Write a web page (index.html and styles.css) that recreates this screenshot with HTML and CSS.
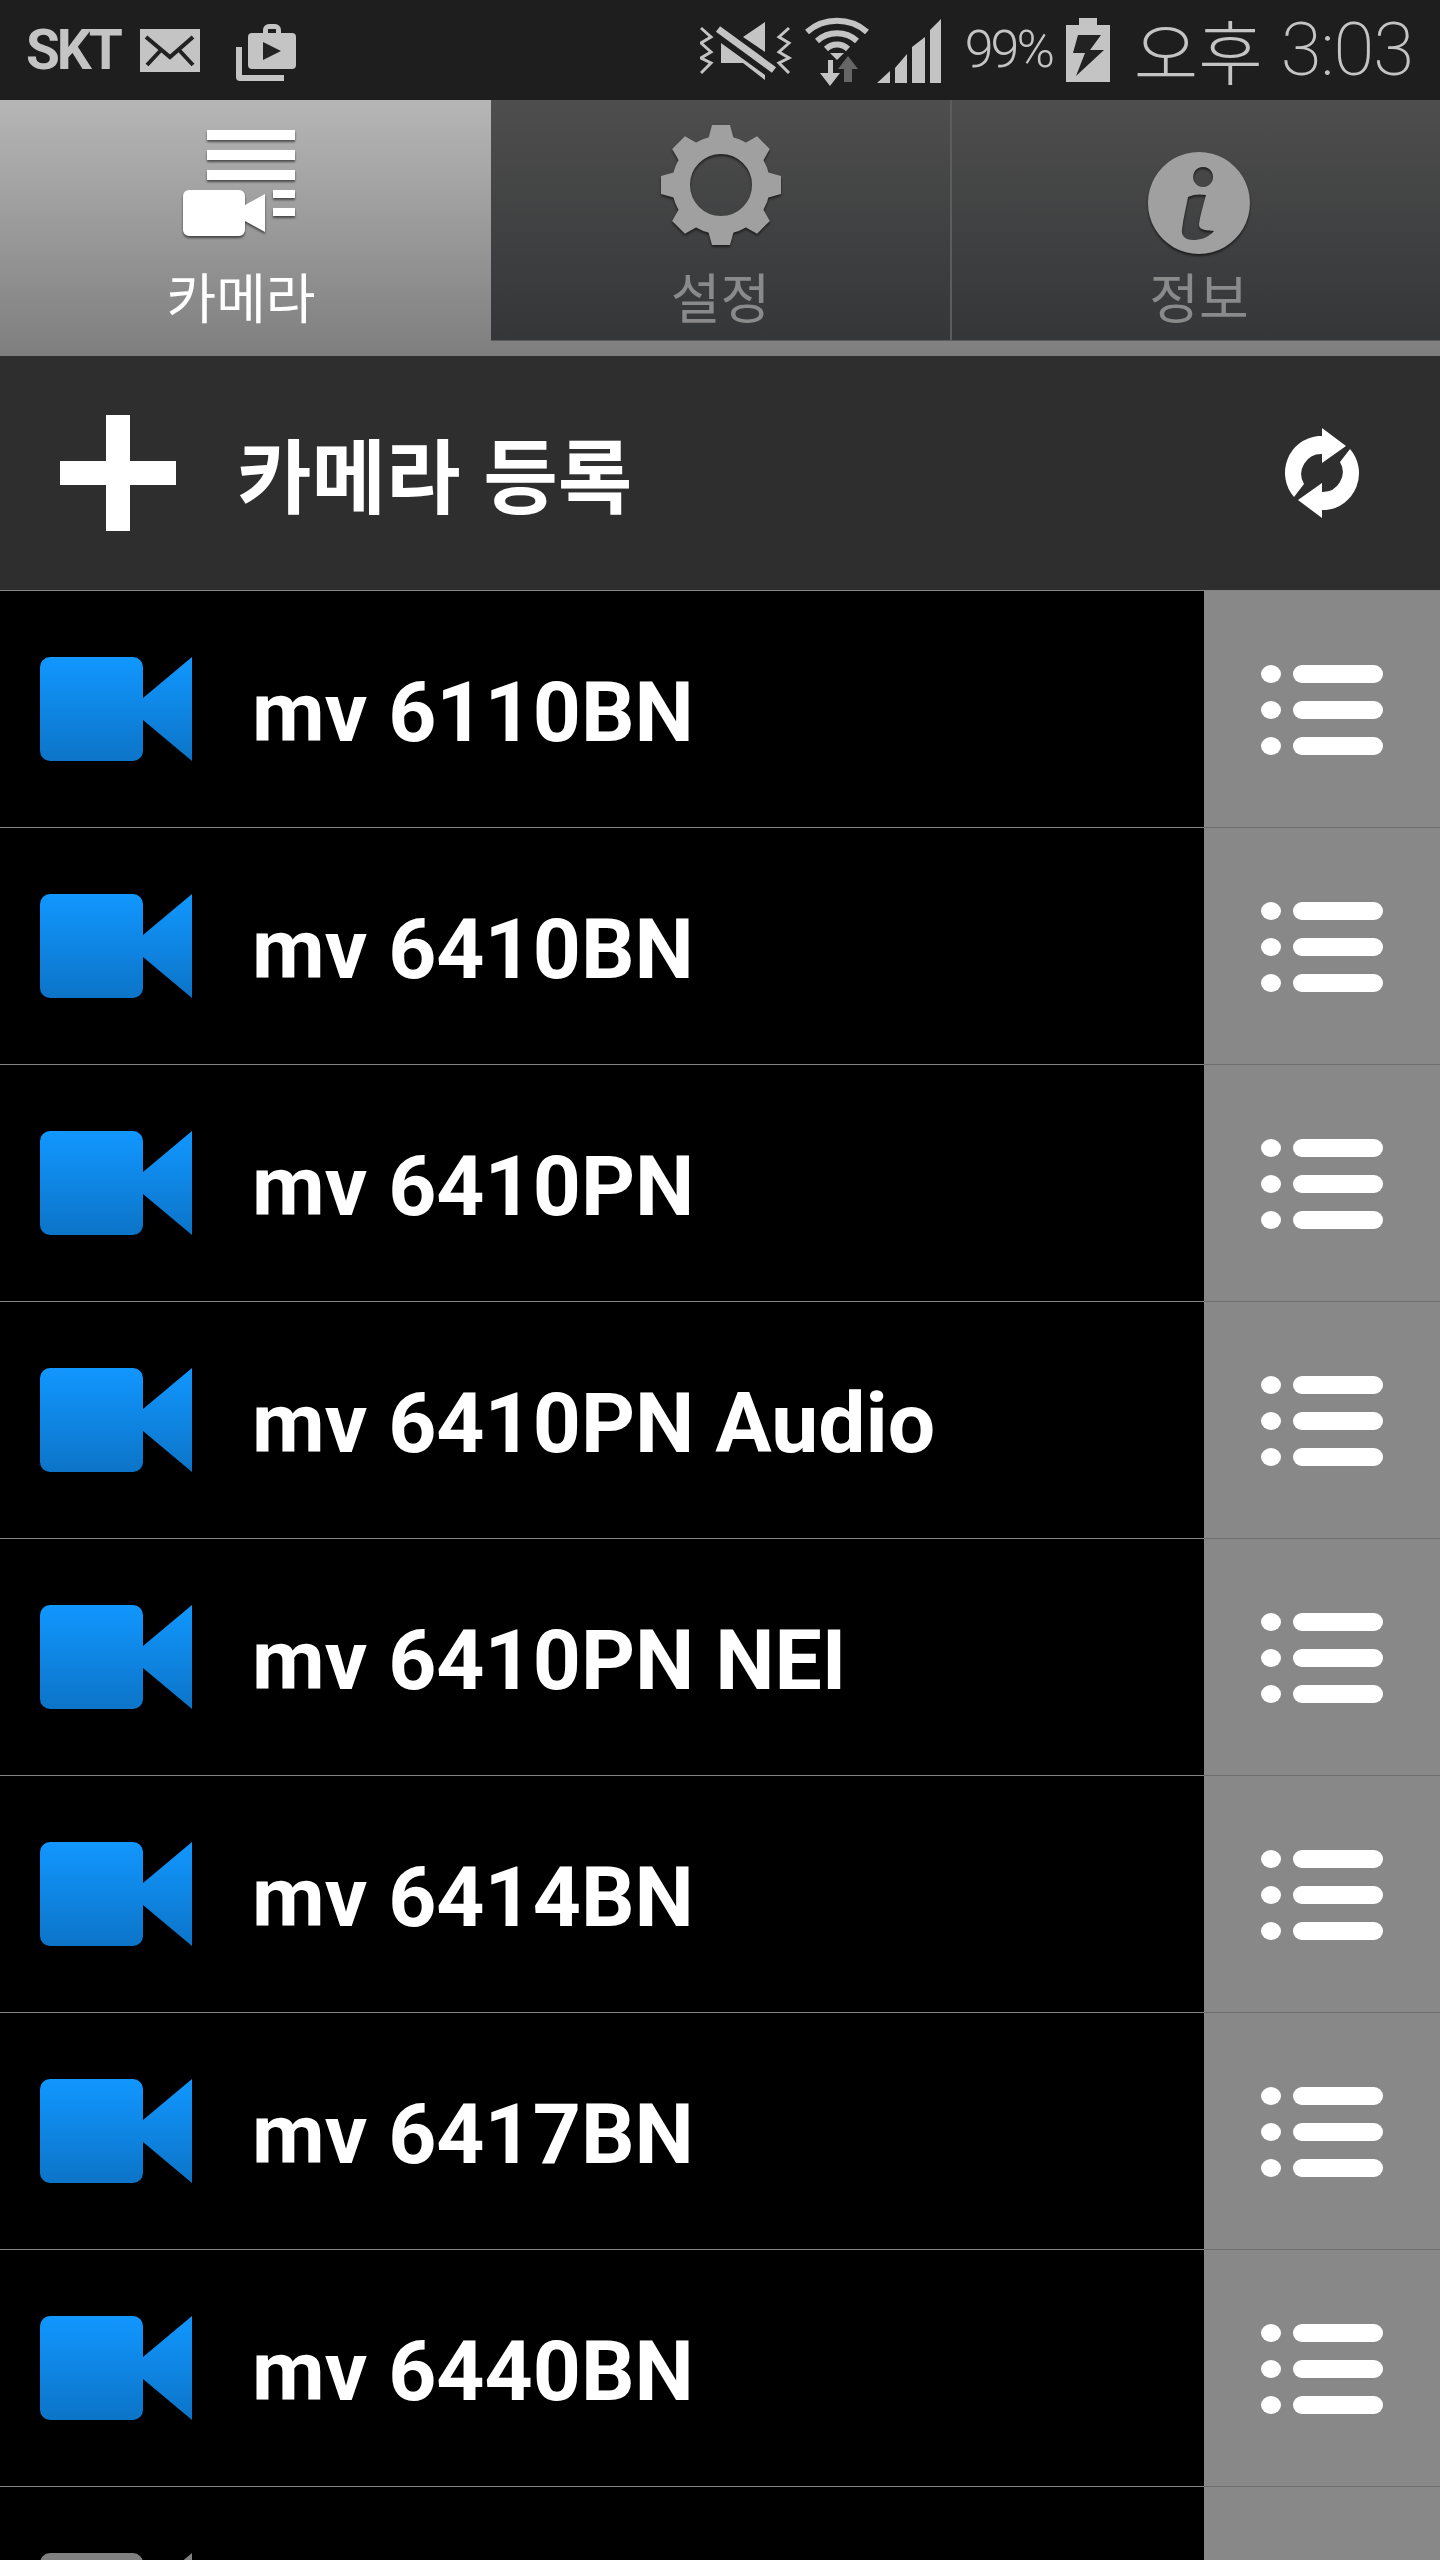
FILE: index.html
```html
<!DOCTYPE html>
<html lang="ko">
<head>
<meta charset="utf-8">
<title>카메라</title>
<link rel="stylesheet" href="styles.css">
</head>
<body>
<svg class="defs" width="0" height="0" aria-hidden="true">
  <defs>
    <linearGradient id="blue" x1="0" y1="0" x2="0" y2="1">
      <stop offset="0" stop-color="#1197ff"/>
      <stop offset="1" stop-color="#0c74c8"/>
    </linearGradient>
    <symbol id="cam" viewBox="0 0 152 104">
      <path d="M10 0H93A10 10 0 0 1 103 10V41L152 0V104L103 63V94A10 10 0 0 1 93 104H10A10 10 0 0 1 0 94V10A10 10 0 0 1 10 0Z"/>
    </symbol>
    <symbol id="menu" viewBox="0 0 122 90">
      <ellipse cx="10" cy="9" rx="10" ry="9"/><rect x="32" y="0" width="90" height="18" rx="9"/>
      <ellipse cx="10" cy="45" rx="10" ry="9"/><rect x="32" y="36" width="90" height="18" rx="9"/>
      <ellipse cx="10" cy="81" rx="10" ry="9"/><rect x="32" y="72" width="90" height="18" rx="9"/>
    </symbol>
  </defs>
</svg>

<header class="status">
  <div class="status-left">
    <span class="carrier">SKT</span>
    <svg class="ico-mail" viewBox="140 29 60 43">
      <rect x="140" y="29" width="60" height="43" fill="#c4c4c4"/>
      <path d="M146 37L170 57L193 37M147 65L161 50M193 65L179 50" fill="none" stroke="#222" stroke-width="4"/>
    </svg>
    <svg class="ico-bag" viewBox="236 24 60 57">
      <path fill="#c4c4c4" fill-rule="evenodd" d="M252 33H263V30A6 6 0 0 1 269 24H275A6 6 0 0 1 281 30V33H292A4 4 0 0 1 296 37V65A4 4 0 0 1 292 69H252A4 4 0 0 1 248 65V37A4 4 0 0 1 252 33ZM268 33H276V29H268Z"/>
      <path fill="#222" d="M263 42L281 51L263 60Z"/>
      <path fill="#c4c4c4" d="M236 47H242V75H284V81H240A4 4 0 0 1 236 77Z"/>
    </svg>
  </div>
  <div class="status-right">
    <svg class="ico-sys" viewBox="699 0 242 100">
      <g fill="none" stroke="#c4c4c4" stroke-width="3">
        <path d="M700 28L710 37L700 43L710 52L700 58L710 63L700 73"/>
        <path d="M788 28L778 37L788 43L778 52L788 58L778 63L788 73"/>
      </g>
      <path fill="#c4c4c4" d="M764 22V52L742 37ZM720 43L764 75V80L742 63H720Z"/>
      <path d="M717 29L773 70" stroke="#c4c4c4" stroke-width="7"/>
      <g fill="none" stroke="#c4c4c4" stroke-width="6">
        <path d="M806 32A46 46 0 0 1 866 32"/>
        <path d="M816 41A30 30 0 0 1 856 41"/>
        <path d="M825 49A16 16 0 0 1 847 49"/>
      </g>
      <path fill="#c4c4c4" d="M829 53H843L836 60Z"/>
      <path fill="#c4c4c4" d="M827 60H832V73H839L829 86L819 73H827Z"/>
      <path fill="#666" d="M843 82V69H837L847 56L857 69H851V82Z"/>
      <path fill="#c4c4c4" d="M876 83L889 71V83ZM894 83V68L906 54V83ZM911 83V47L924 37V83ZM929 83V30L940 19V83Z"/>
    </svg>
    <span class="battery-pct">99%</span>
    <svg class="ico-batt" viewBox="1065 18 44 64">
      <path fill="#c4c4c4" d="M1078 18H1096V25H1109V82H1065V25H1078Z"/>
      <path fill="#222" d="M1077 35H1100L1089 50H1103L1075 76L1084 53H1072Z"/>
    </svg>
    <span class="clock"><span class="clock-ampm">오후</span><span class="clock-time">3:03</span></span>
  </div>
</header>

<nav class="tabs">
  <div class="tab tab-active tab-first">
    <svg class="tab-icon" viewBox="170 120 136 140" fill="#fff">
      <rect x="206" y="130" width="88" height="10"/>
      <rect x="206" y="150" width="88" height="10"/>
      <rect x="206" y="170" width="88" height="10"/>
      <rect x="272" y="190" width="22" height="8"/>
      <rect x="272" y="208" width="22" height="8"/>
      <path d="M188 190H238A6 6 0 0 1 244 196V205L264 194V232L244 221V230A6 6 0 0 1 238 236H188A6 6 0 0 1 182 230V196A6 6 0 0 1 188 190Z"/>
    </svg>
    <span class="tab-label">카메라</span>
  </div>
  <div class="tab tab-second">
    <svg class="tab-icon" viewBox="650 120 140 140" fill="#a0a0a0">
      <g transform="translate(720 185)">
        <circle r="40" fill="none" stroke="#a0a0a0" stroke-width="18"/>
        <g id="teeth">
          <path id="tooth" d="M-14 -42L-9 -60H9L14 -42Z"/>
          <use href="#tooth" transform="rotate(45)"/>
          <use href="#tooth" transform="rotate(90)"/>
          <use href="#tooth" transform="rotate(135)"/>
          <use href="#tooth" transform="rotate(180)"/>
          <use href="#tooth" transform="rotate(225)"/>
          <use href="#tooth" transform="rotate(270)"/>
          <use href="#tooth" transform="rotate(315)"/>
        </g>
      </g>
    </svg>
    <span class="tab-label">설정</span>
  </div>
  <div class="tab tab-third">
    <svg class="tab-icon" viewBox="1130 120 134 140" fill="#a0a0a0">
      <path fill-rule="evenodd" d="M1197 152A51 51 0 1 1 1196.9 152ZM1201 167A10 10 0 1 0 1201.1 167ZM1186 197C1192 194 1198 194 1204 195C1201 206 1198 216 1197 224C1197 229 1200 230 1212 231C1206 238 1198 240 1191 240C1184 240 1179 236 1180 230C1181 219 1184 208 1186 197Z"/>
    </svg>
    <span class="tab-label">정보</span>
  </div>
</nav>

<section class="register">
  <svg class="ico-plus" viewBox="0 0 116 116" fill="#fff"><path d="M46 0H70V46H116V70H70V116H46V70H0V46H46Z"/></svg>
  <span class="register-label">카메라 등록</span>
  <svg class="ico-refresh" viewBox="-46 -46 92 92" fill="#fff">
    <path id="half" d="M-28 24A37 37 0 0 1 -4 -37L0 -37V-45L24 -27L0 -10V-19A20 20 0 0 0 -18 11Z"/>
    <use href="#half" transform="rotate(180)"/>
  </svg>
</section>

<ul class="list">
  <li class="row"><div class="row-main"><svg class="cam" fill="url(#blue)"><use href="#cam"/></svg><span class="row-name">mv 6110BN</span></div><div class="row-side"><svg class="menu" fill="#fff"><use href="#menu"/></svg></div></li>
  <li class="row"><div class="row-main"><svg class="cam" fill="url(#blue)"><use href="#cam"/></svg><span class="row-name">mv 6410BN</span></div><div class="row-side"><svg class="menu" fill="#fff"><use href="#menu"/></svg></div></li>
  <li class="row"><div class="row-main"><svg class="cam" fill="url(#blue)"><use href="#cam"/></svg><span class="row-name">mv 6410PN</span></div><div class="row-side"><svg class="menu" fill="#fff"><use href="#menu"/></svg></div></li>
  <li class="row"><div class="row-main"><svg class="cam" fill="url(#blue)"><use href="#cam"/></svg><span class="row-name">mv 6410PN Audio</span></div><div class="row-side"><svg class="menu" fill="#fff"><use href="#menu"/></svg></div></li>
  <li class="row"><div class="row-main"><svg class="cam" fill="url(#blue)"><use href="#cam"/></svg><span class="row-name">mv 6410PN NEI</span></div><div class="row-side"><svg class="menu" fill="#fff"><use href="#menu"/></svg></div></li>
  <li class="row"><div class="row-main"><svg class="cam" fill="url(#blue)"><use href="#cam"/></svg><span class="row-name">mv 6414BN</span></div><div class="row-side"><svg class="menu" fill="#fff"><use href="#menu"/></svg></div></li>
  <li class="row"><div class="row-main"><svg class="cam" fill="url(#blue)"><use href="#cam"/></svg><span class="row-name">mv 6417BN</span></div><div class="row-side"><svg class="menu" fill="#fff"><use href="#menu"/></svg></div></li>
  <li class="row"><div class="row-main"><svg class="cam" fill="url(#blue)"><use href="#cam"/></svg><span class="row-name">mv 6440BN</span></div><div class="row-side"><svg class="menu" fill="#fff"><use href="#menu"/></svg></div></li>
  <li class="row"><div class="row-main"><svg class="cam" fill="#808080"><use href="#cam"/></svg></div><div class="row-side"></div></li>
</ul>
</body>
</html>
```

FILE: styles.css
```css
* { box-sizing: border-box; }
html, body {
  margin: 0;
  padding: 0;
  width: 1440px;
  height: 2560px;
  overflow: hidden;
  background: #000;
  font-family: Roboto, "Noto Sans CJK KR", sans-serif;
  color: #fff;
}
.defs { position: absolute; }

/* status bar */
.status {
  height: 100px;
  background: #1e1e1e;
  color: #c4c4c4;
  display: flex;
  justify-content: space-between;
  align-items: center;
}
.status-left { display: flex; align-items: center; padding-left: 26px; }
.carrier {
  font-size: 55px;
  line-height: 100px;
  font-weight: 700;
  letter-spacing: -3px;
  width: 114px;
}
.ico-mail { width: 60px; height: 43px; margin-top: 1px; }
.ico-bag { width: 60px; height: 57px; margin-left: 36px; margin-top: 5px; }
.status-right { display: flex; align-items: center; padding-right: 27px; }
.ico-sys { width: 242px; height: 100px; }
.battery-pct {
  font-size: 52px;
  font-weight: 300;
  letter-spacing: -3px;
  line-height: 100px;
  width: 101px;
  margin-left: 23px;
}
.ico-batt { width: 44px; height: 64px; margin-top: 0; }
.clock { display: flex; align-items: center; margin-left: 24px; font-weight: 300; }
.clock-ampm {
  font-family: "Noto Sans CJK KR", sans-serif;
  font-size: 70px;
  line-height: 100px;
  font-weight: 300;
  width: 147px;
}
.clock-time {
  font-size: 74px;
  line-height: 100px;
  font-weight: 200;
  letter-spacing: -1px;
}

/* tabs */
.tabs {
  height: 256px;
  display: flex;
  align-items: flex-start;
  background: linear-gradient(#b6b6b6, #7e7e7e);
}
.tab {
  display: flex;
  flex-direction: column;
  align-items: center;
  height: 241px;
  padding-top: 20px;
  background: linear-gradient(#4e4e4e, #353638);
  border-bottom: 1px solid #5c5c5c;
  color: #8a8a8a;
}
.tab-active {
  background: none;
  border-bottom: 0;
  color: #fff;
}
.tab-first { width: 491px; padding-right: 9px; }
.tab-second { width: 459px; }
.tab-third { width: 490px; border-left: 2px solid #5c5c5c; padding-left: 6px; }
.tab-icon {
  height: 140px;
  flex: none;
  filter: drop-shadow(0 2px 1px rgba(0, 0, 0, .55));
}
.tab-first .tab-icon { width: 136px; margin-left: -4px; }
.tab-second .tab-icon { width: 140px; }
.tab-third .tab-icon { width: 134px; }
.tab-label {
  font-family: "Noto Sans CJK KR", sans-serif;
  font-size: 54px;
  line-height: 60px;
  margin-top: 6px;
}

/* register bar */
.register {
  height: 235px;
  background: #2e2e2e;
  border-bottom: 1px solid #858585;
  display: flex;
  align-items: center;
  padding: 0 72px 1px 60px;
}
.ico-plus { width: 116px; height: 116px; flex: none; }
.register-label {
  font-family: "Noto Sans CJK KR", sans-serif;
  font-size: 81px;
  font-weight: 700;
  line-height: 100px;
  margin-left: 61px;
  margin-bottom: 2px;
  flex: 1;
}
.ico-refresh { width: 92px; height: 92px; flex: none; }

/* camera list */
.list { list-style: none; margin: 0; padding: 0; }
.row { height: 237px; display: flex; }
.row-main {
  flex: 1;
  display: flex;
  align-items: center;
  padding-left: 40px;
  border-bottom: 1px solid #858585;
}
.row-side {
  width: 236px;
  flex: none;
  background: #888;
  border-bottom: 1px solid #6e6e6e;
  display: flex;
  align-items: center;
  padding: 1px 0 0 57px;
}
.cam { width: 152px; height: 104px; flex: none; }
.menu { width: 122px; height: 90px; flex: none; }
.row-name {
  font-size: 84px;
  font-weight: 700;
  line-height: 100px;
  margin-left: 60px;
  margin-top: 8px;
  white-space: nowrap;
}
```
